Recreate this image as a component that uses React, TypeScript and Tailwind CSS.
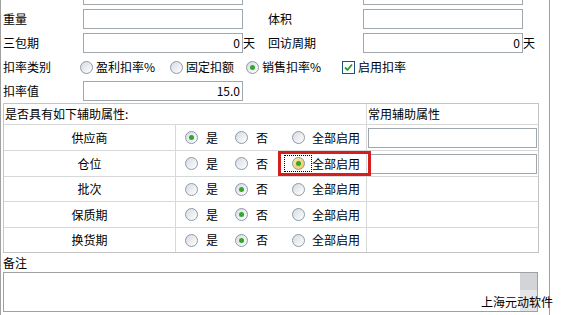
import React from 'react'

const font = { fontFamily: '"Noto Sans CJK SC", "Liberation Sans", sans-serif' }

function Radio({ checked = false, hover = false }: { checked?: boolean; hover?: boolean }) {
  return (
    <span
      className={
        'flex items-center justify-center w-[13px] h-[13px] shrink-0 rounded-full border border-[#8b9aab] ' +
        (hover ? 'bg-linear-to-br from-[#f7e9a8] to-[#e8c860]' : 'bg-linear-to-br from-[#d6dbe0] to-white')
      }
    >
      {checked && <span className="w-[5px] h-[5px] rounded-full bg-[#31a72e]" />}
    </span>
  )
}

function Checkbox() {
  return (
    <span className="flex items-center justify-center w-[13px] h-[13px] shrink-0 border border-[#1c5180] bg-white">
      <svg width="9" height="9" viewBox="0 0 9 9">
        <path d="M1 4.5 L3.5 7 L8 1.5" stroke="#21a121" strokeWidth="1.8" fill="none" />
      </svg>
    </span>
  )
}

function Field({ value = '', w = 'w-[160px]' }: { value?: string; w?: string }) {
  return (
    <div className={`${w} h-[20px] border border-[#a0a7ad] bg-white text-right pr-[2px] text-[12px] leading-[18px]`}>
      {value}
    </div>
  )
}

function FormRow({
  label1,
  v1,
  unit1,
  label2,
  v2,
  unit2,
}: {
  label1: string
  v1?: string
  unit1?: string
  label2: string
  v2?: string
  unit2?: string
}) {
  return (
    <div className="flex items-center h-6">
      <div className="w-[80px]">{label1}</div>
      <Field value={v1} />
      <div className="w-[25px]">{unit1}</div>
      <div className="w-[95px]">{label2}</div>
      <Field value={v2} />
      <div>{unit2}</div>
    </div>
  )
}

const rows = [
  { name: '供应商', yes: true, input: true, h: 'h-[25px]' },
  { name: '仓位', all: true, input: true, hl: true, h: 'h-[25px]' },
  { name: '批次', no: true, h: 'h-[24px]' },
  { name: '保质期', no: true, h: 'h-[25px]' },
  { name: '换货期', no: true, h: 'h-[24px]' },
]

export default function App() {
  return (
    <div className="w-[563px] h-[315px] overflow-hidden bg-white text-[12px] text-black" style={font}>
      <div className="relative flow-root w-[550px] h-[315px] border-x border-[#a0a0a0] pl-[2px]">
        <div className="-mt-[17px]">
          <FormRow label1="" label2="" />
          <FormRow label1="重量" label2="体积" />
          <FormRow label1="三包期" v1="0" unit1="天" label2="回访周期" v2="0" unit2="天" />
          <div className="flex items-center h-6">
            <div className="w-[77px]">扣率类别</div>
            <div className="flex items-center gap-[3px]">
              <Radio />
              <span className="w-[71px]">盈利扣率%</span>
              <Radio />
              <span className="w-[57px]">固定扣额</span>
              <Radio checked />
              <span className="w-[77px]">销售扣率%</span>
              <Checkbox />
              <span>启用扣率</span>
            </div>
          </div>
          <div className="flex items-center h-6">
            <div className="w-[80px]">扣率值</div>
            <Field value="15.0" />
          </div>
        </div>

        <div className="relative w-[536px] border border-[#c4c4c4] bg-[#d8d8d8] grid grid-cols-[171px_190px_171px] gap-px">
          <div className="col-span-2 bg-white h-[20px] flex items-center pl-px">是否具有如下辅助属性:</div>
          <div className="bg-white h-[20px] flex items-center pl-px">常用辅助属性</div>
          {rows.map((r) => (
            <React.Fragment key={r.name}>
              <div className={`bg-white ${r.h} flex items-center justify-center`}>{r.name}</div>
              <div className={`bg-white ${r.h} flex items-center pl-[9px]`}>
                <Radio checked={r.yes} />
                <span className="ml-2">是</span>
                <span className="ml-[17px]">
                  <Radio checked={r.no} />
                </span>
                <span className="ml-2">否</span>
                <span className="ml-[24px]">
                  <Radio checked={r.all} hover={r.hl} />
                </span>
                <span className="ml-[7px]">全部启用</span>
              </div>
              <div className={`bg-white ${r.h} flex items-center px-px`}>
                {r.input && <div className="w-full h-[20px] border border-[#a0a7ad]" />}
              </div>
            </React.Fragment>
          ))}
          <div className="absolute left-[274px] top-[47px] w-[93px] h-[25px] border-[3px] border-[#d41f1f]">
            <div className="ml-[3px] mt-px w-[28px] h-[17px] border border-dotted border-black" />
          </div>
        </div>

        <div className="h-[19px] flex items-center">备注</div>
        <div className="w-[535px] h-[40px] border border-[#a0a0a0] flex justify-end">
          <div className="w-[17px] h-full bg-[#ececec] flex flex-col">
            <div className="h-[17px] bg-[#d2d4d8]" />
            <div className="flex-1 bg-[#e4e5e8]" />
          </div>
        </div>
        <div className="absolute left-[480px] top-[294px] leading-[16px] whitespace-nowrap">上海元动软件</div>
      </div>
    </div>
  )
}
